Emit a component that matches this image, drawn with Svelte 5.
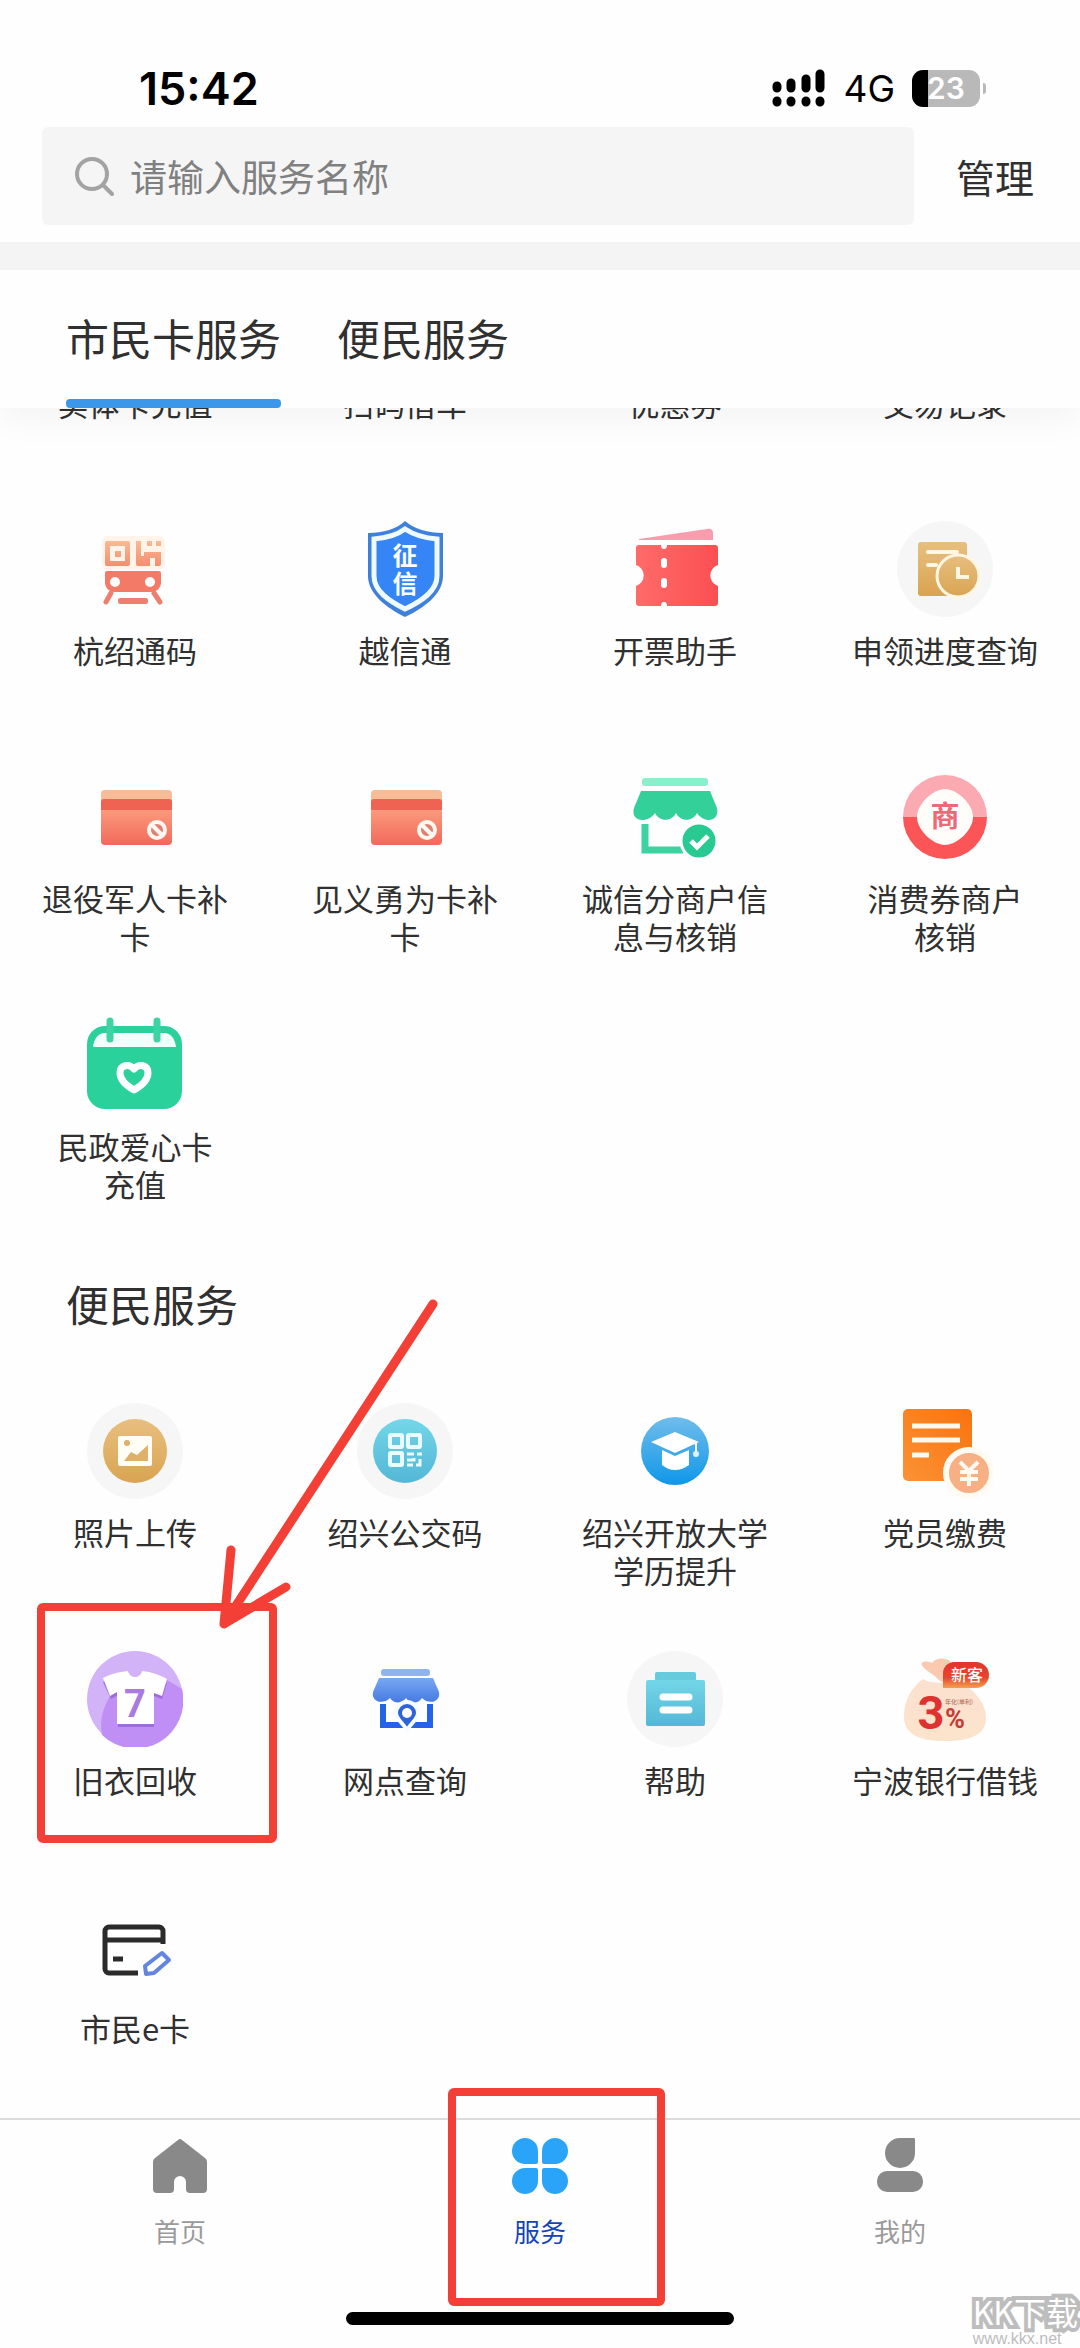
<script lang="ts">
	interface Service {
		name: string;
		icon?: string;
		marked?: boolean;
	}

	const scrolledServices: Service[] = [
		{ name: '实体卡充值' },
		{ name: '扫码借车' },
		{ name: '优惠券' },
		{ name: '交易记录' }
	];

	const cardServices: Service[] = [
		{ name: '杭绍通码', icon: 'metro' },
		{ name: '越信通', icon: 'shield' },
		{ name: '开票助手', icon: 'ticket' },
		{ name: '申领进度查询', icon: 'progress' },
		{ name: '退役军人卡补\n卡', icon: 'card' },
		{ name: '见义勇为卡补\n卡', icon: 'card' },
		{ name: '诚信分商户信\n息与核销', icon: 'shop' },
		{ name: '消费券商户\n核销', icon: 'coupon' },
		{ name: '民政爱心卡\n充值', icon: 'calendar' }
	];

	const publicServices: Service[] = [
		{ name: '照片上传', icon: 'photo' },
		{ name: '绍兴公交码', icon: 'qrcode' },
		{ name: '绍兴开放大学\n学历提升', icon: 'degree' },
		{ name: '党员缴费', icon: 'fee' },
		{ name: '旧衣回收', icon: 'shirt', marked: true },
		{ name: '网点查询', icon: 'branch' },
		{ name: '帮助', icon: 'help' },
		{ name: '宁波银行借钱', icon: 'loan' },
		{ name: '市民e卡', icon: 'ecard' }
	];

	const tabs = ['市民卡服务', '便民服务'];
	const navItems = [
		{ id: 'home', name: '首页' },
		{ id: 'services', name: '服务' },
		{ id: 'mine', name: '我的' }
	];

	let activeTab = $state(0);
	let activeNav = $state('services');
	let keyword = $state('');
</script>

{#snippet serviceIcon(name: string)}
	<svg class="service-icon" viewBox="0 0 96 96" aria-hidden="true">
		{#if name === 'metro'}
			<rect x="15" y="15" width="63" height="34" rx="6" fill="#fff3ea" />
			<path
				fill="url(#g-metro)"
				fill-rule="evenodd"
				d="M20 20h21a2 2 0 0 1 2 2v21a2 2 0 0 1-2 2H20a2 2 0 0 1-2-2V22a2 2 0 0 1 2-2zm3 5v15h15V25zm5 5h6v6h-6zM49 20h5v15h3v-4h17v12a2 2 0 0 1-2 2h-4v-8h-5v8H51a2 2 0 0 1-2-2zM60 20h5v5h-5zM69 20h5v5h-5z"
			/>
			<path
				fill="#f27a66"
				fill-rule="evenodd"
				d="M20 50h52a2 2 0 0 1 2 2v10a9 9 0 0 1-9 9H27a9 9 0 0 1-9-9V52a2 2 0 0 1 2-2zm8 6a5 5 0 1 0 0 10 5 5 0 0 0 0-10zm35 0a5 5 0 1 0 0 10 5 5 0 0 0 0-10z"
			/>
			<path d="M24 72l-5 9M67 72l6 9" stroke="#ee7f70" stroke-width="5" stroke-linecap="round" />
			<rect x="31" y="77" width="30" height="6" rx="2" fill="#ee7f70" />
		{:else if name === 'shield'}
			<path fill="#3f80dc" d="M48 0c-8 8-22 12-37 12v43c0 18 19 32 37 41 19-9 38-23 38-41V12C71 12 57 8 48 0z" />
			<path
				fill="#3585f6"
				stroke="#effaff"
				stroke-width="5"
				d="M48 8c-8 6-18 9-31 10v37c0 15 15 25 31 33 17-8 32-18 32-33V18C67 17 57 14 48 8z"
			/>
			<text class="icon-text" x="48" y="44" font-size="25" font-weight="700" fill="#fff">征</text>
			<text class="icon-text" x="48" y="72" font-size="25" font-weight="700" fill="#fff">信</text>
		{:else if name === 'ticket'}
			<path fill="#f99dae" d="M12 18L80 8c4-1 6 1 6 4v7H12z" />
			<path
				fill="url(#g-red)"
				d="M12 24h22a3 4 0 0 0 6 0h48a3 3 0 0 1 3 3v17a11 11 0 0 0 0 21v17a3 3 0 0 1-3 3H40a3 4 0 0 0-6 0H12a3 3 0 0 1-3-3V65a11 11 0 0 0 0-21V27a3 3 0 0 1 3-3z"
			/>
			<rect x="34" y="37" width="6" height="10" rx="3" fill="#fff" />
			<rect x="34" y="57" width="6" height="10" rx="3" fill="#fff" />
		{:else if name === 'progress'}
			<circle cx="48" cy="48" r="48" fill="#f6f6f6" />
			<rect x="21" y="21" width="49" height="54" rx="3" fill="url(#g-gold)" />
			<path d="M31 31h29M31 44h8" stroke="#fff7e4" stroke-width="4" stroke-linecap="round" />
			<circle cx="61" cy="55" r="21" fill="url(#g-gold)" stroke="#fff7e4" stroke-width="3" />
			<path d="M61 46v10h11" fill="none" stroke="#fff7e4" stroke-width="4" />
		{:else if name === 'card'}
			<rect x="14" y="21" width="71" height="30" rx="4" fill="#f7bd98" />
			<rect x="14" y="30" width="71" height="20" rx="3" fill="#ee6352" />
			<path fill="url(#g-card)" d="M14 41h71v31a4 4 0 0 1-4 4H18a4 4 0 0 1-4-4z" />
			<circle cx="70" cy="61" r="8" fill="#e08070" stroke="#fff8f0" stroke-width="4" />
			<path d="M64 55l12 12" stroke="#fff8f0" stroke-width="4" />
		{:else if name === 'shop'}
			<rect x="15" y="9" width="66" height="8" rx="3" fill="#8aefcb" />
			<path
				fill="#33d09a"
				d="M14 22h69l7 17c3 14-13 16-20 5-4 9-17 9-21 0-4 9-17 9-21 0C21 55 3 53 7 39z"
			/>
			<path d="M18 55v26h38" fill="none" stroke="#3dd3a0" stroke-width="7" />
			<circle cx="72" cy="72" r="18" fill="#28ca92" stroke="#fefefe" stroke-width="3" />
			<path d="M64 72l6 6 11-11" fill="none" stroke="#fff" stroke-width="5" />
		{:else if name === 'coupon'}
			<path fill="#fcaab2" d="M6 48a42 42 0 0 1 84 0z" />
			<path fill="#fb5558" d="M6 48a42 42 0 0 0 84 0z" />
			<path
				fill="#fffdfa"
				d="M48 20c12 0 28 15 28 28S60 76 48 76 20 61 20 48s16-28 28-28z"
			/>
			<text class="icon-text" x="48" y="58" font-size="29" font-weight="700" fill="#ee6878">商</text>
		{:else if name === 'calendar'}
			<rect x="0" y="9" width="95" height="83" rx="18" fill="#2bd19a" />
			<path fill="#effff9" d="M18 16h59c7 0 11 6 12 14H6c1-8 5-14 12-14z" />
			<path d="M23 4v18M70 4v18" stroke="#3fd3a3" stroke-width="7" stroke-linecap="round" />
			<path
				d="M47 73c-7-4-14-10-14-17 0-8 9-10 14-4 5-6 14-4 14 4 0 7-7 13-14 17z"
				fill="#2bd19a"
				stroke="#fff"
				stroke-width="7"
				stroke-linejoin="round"
			/>
		{:else if name === 'photo'}
			<circle cx="48" cy="48" r="48" fill="#f6f6f6" />
			<circle cx="48" cy="48" r="32" fill="url(#g-gold)" />
			<rect x="31" y="33" width="34" height="30" rx="2" fill="#fffdf5" />
			<circle cx="40" cy="40" r="3" fill="#dfb069" />
			<path fill="#dfb069" d="M37 58l7-9 6 3 11-10v16z" />
		{:else if name === 'qrcode'}
			<circle cx="48" cy="48" r="48" fill="#f6f6f6" />
			<circle cx="48" cy="48" r="32" fill="url(#g-cyan)" />
			<g fill="none" stroke="#e9fcff" stroke-width="4">
				<rect x="33" y="32" width="12" height="12" rx="1" />
				<rect x="51" y="32" width="12" height="12" rx="1" />
				<rect x="33" y="50" width="12" height="12" rx="1" />
				<path d="M50 51h7M60 51h5M50 57h7v-2M50 62h6M59 62h4v-6" stroke-width="3" />
			</g>
		{:else if name === 'degree'}
			<circle cx="48" cy="48" r="34" fill="url(#g-blue)" />
			<path fill="#fff" d="M48 29l24 10-24 11-24-11z" />
			<path fill="#fff" d="M35 47l13 6 14-6v15c-4 3-9 5-14 5s-9-2-13-5z" />
			<path d="M69 40v9" stroke="#fff" stroke-width="2" />
			<circle cx="69" cy="51" r="3" fill="#dff2ff" />
		{:else if name === 'fee'}
			<rect x="6" y="6" width="69" height="72" rx="5" fill="url(#g-orange)" />
			<path d="M15 23h48M15 37h48M15 52h17" stroke="#fff8ec" stroke-width="5" />
			<circle cx="72" cy="70" r="23" fill="#f6b084" stroke="#fffaf2" stroke-width="6" />
			<path
				d="M63 59l9 9 9-9M63 69h18M63 76h18M72 68v15"
				fill="none"
				stroke="#fffaf2"
				stroke-width="4"
			/>
		{:else if name === 'shirt'}
			<circle cx="48" cy="48" r="48" fill="#d2b3f8" />
			<path fill="#c08ff5" d="M72 24l23 14a48 48 0 0 1-80 46c-3-16 2-30 9-40z" />
			<path
				fill="#9c6fd8"
				d="M41 23c2 8 12 8 14 0l25 9-5 16-8-3v31H31V44l-7 4-8-17z"
			/>
			<path
				fill="#fff"
				d="M41 20c2 8 12 8 14 0 10 1 18 4 25 8l-5 17-8-3v31H30V41l-7 4-7-18c8-4 15-6 25-7z"
			/>
			<text class="shirt-number" x="48" y="66" font-size="38" font-weight="700" fill="#a97be0">7</text>
		{:else if name === 'branch'}
			<rect x="24" y="18" width="49" height="7" rx="3" fill="#8db4ef" />
			<path
				fill="url(#g-awning)"
				d="M22 27h54l6 14c2 10-10 13-17 6-4 6-12 6-16 0-4 6-12 6-16 0-7 7-19 4-17-6z"
			/>
			<path d="M26 53v21h47V53" fill="none" stroke="#2263e8" stroke-width="6" />
			<path
				d="M50 79C45 71 39 68 39 62a11 11 0 0 1 22 0c0 6-6 9-11 17z"
				fill="#2f63d8"
				stroke="#f5fbff"
				stroke-width="4"
			/>
			<circle cx="50" cy="62" r="5" fill="#fff" />
		{:else if name === 'help'}
			<circle cx="48" cy="48" r="48" fill="#f6f6f6" />
			<rect x="28" y="21" width="41" height="10" rx="2" fill="#66cbdc" />
			<rect x="19" y="29" width="59" height="46" rx="2" fill="url(#g-cyan)" />
			<path d="M36 46h26M36 59h26" stroke="#fff" stroke-width="7" stroke-linecap="round" />
		{:else if name === 'loan'}
			<path fill="#fbc9b0" d="M43 30c-5-6-12-9-16-13-6-6 1-8 8-5 5-6 14-5 18-2l3 10-7 12z" />
			<path
				fill="url(#g-bag)"
				d="M26 28c8 5 20 4 34 2 14 6 29 20 29 37 0 16-14 23-41 23S7 83 7 65c0-16 8-29 19-37z"
			/>
			<path fill="url(#g-badge)" d="M57 11h22a13 13 0 0 1 0 26H46V22c0-6 5-11 11-11z" />
			<text class="icon-text" x="70" y="30" font-size="16" font-weight="500" fill="#fff">新客</text>
			<text class="rate" x="34" y="78" font-size="47" font-weight="700" fill="#de3230">3</text>
			<text class="rate" x="58" y="77" font-size="27" font-weight="700" fill="#c63c38">%</text>
			<text class="icon-text" x="62" y="53" font-size="6" fill="#b0614f">年化(单利)</text>
		{:else if name === 'ecard'}
			<path
				d="M76 45V32a4 4 0 0 0-4-4H22a4 4 0 0 0-4 4v38a4 4 0 0 0 4 4h29M18 41h58"
				fill="none"
				stroke="#2b2b2b"
				stroke-width="5"
			/>
			<path d="M26 60h10" stroke="#2b2b2b" stroke-width="5" />
			<path
				d="M75 54l7 7-15 13-8 1-1-8z"
				fill="none"
				stroke="#6384e0"
				stroke-width="4"
				stroke-linejoin="round"
			/>
		{/if}
	</svg>
{/snippet}

{#snippet serviceGrid(services: Service[])}
	<div class="service-grid">
		{#each services as service}
			<a href="#service" class="service">
				{#if service.icon}
					{@render serviceIcon(service.icon)}
				{/if}
				<span class="service-name">{service.name}</span>
				{#if service.marked}
					<span class="mark mark-service"></span>
					<svg class="arrow" viewBox="0 0 230 340" aria-hidden="true">
						<path d="M218 8L9 328M16 254L9 328L71 291" />
					</svg>
				{/if}
			</a>
		{/each}
	</div>
{/snippet}

<svg class="defs" aria-hidden="true">
	<defs>
		<linearGradient id="g-metro" x2="0" y2="1">
			<stop offset="0" stop-color="#f8bb94" /><stop offset="1" stop-color="#f58d70" />
		</linearGradient>
		<linearGradient id="g-red">
			<stop offset="0" stop-color="#ff6b69" /><stop offset="1" stop-color="#fb4f52" />
		</linearGradient>
		<linearGradient id="g-gold" x2="0" y2="1">
			<stop offset="0" stop-color="#e8bf80" /><stop offset="1" stop-color="#d9a451" />
		</linearGradient>
		<linearGradient id="g-card" x2="0" y2="1">
			<stop offset="0" stop-color="#fb9a7c" /><stop offset="1" stop-color="#f1695b" />
		</linearGradient>
		<linearGradient id="g-cyan" x2="0" y2="1">
			<stop offset="0" stop-color="#73d6e8" /><stop offset="1" stop-color="#54b7d6" />
		</linearGradient>
		<linearGradient id="g-blue" x2="0" y2="1">
			<stop offset="0" stop-color="#70bdeb" /><stop offset="1" stop-color="#0f97e9" />
		</linearGradient>
		<linearGradient id="g-orange" x1="1" x2="0" y2="1">
			<stop offset="0" stop-color="#f9730f" /><stop offset="1" stop-color="#fb9236" />
		</linearGradient>
		<linearGradient id="g-awning" x2="0" y2="1">
			<stop offset="0" stop-color="#78a8f2" /><stop offset="1" stop-color="#457ae2" />
		</linearGradient>
		<linearGradient id="g-bag" x2="0" y2="1">
			<stop offset="0" stop-color="#fce0d0" /><stop offset="1" stop-color="#fbe4cb" />
		</linearGradient>
		<linearGradient id="g-badge" x2="0" y2="1">
			<stop offset="0" stop-color="#e2342c" />
			<stop offset="0.6" stop-color="#e5452f" />
			<stop offset="1" stop-color="#f5a04e" />
		</linearGradient>
	</defs>
</svg>

<div class="page">
	<div class="status-bar">
		<span class="time">15:42</span>
		<div class="status-right">
			<svg class="signal" viewBox="0 0 54 38" aria-hidden="true">
				<g stroke="#000" stroke-width="9" stroke-linecap="round">
					<path d="M5 17v2M19 14v5M34 10v9M48 5v14M5 32v1M19 32v1M34 32v1M48 32v1" />
				</g>
			</svg>
			<span class="network">4G</span>
			<div class="battery"><span>23</span></div>
		</div>
	</div>

	<header class="search-row">
		<label class="search">
			<svg class="search-icon" viewBox="0 0 40 40" aria-hidden="true">
				<circle cx="18" cy="18" r="15" fill="none" stroke="#a3a3a3" stroke-width="4" />
				<path d="M29 29l9 9" stroke="#a3a3a3" stroke-width="4" stroke-linecap="round" />
			</svg>
			<input type="text" aria-label="搜索服务" placeholder="请输入服务名称" bind:value={keyword} />
		</label>
		<button class="manage">管理</button>
	</header>

	<div class="tabs">
		{#each tabs as tab, i}
			<button class="tab" class:active={activeTab === i} onclick={() => (activeTab = i)}>{tab}</button>
		{/each}
	</div>

	<main>
		<div class="scrolled">
			{@render serviceGrid(scrolledServices)}
		</div>
		{@render serviceGrid(cardServices)}
		<h2>便民服务</h2>
		{@render serviceGrid(publicServices)}
	</main>

	<nav>
		{#each navItems as item}
			<button
				class="nav-item"
				class:active={activeNav === item.id}
				onclick={() => (activeNav = item.id)}
			>
				<svg class="nav-icon" viewBox="0 0 56 56" aria-hidden="true">
					{#if item.id === 'home'}
						<path
							d="M26 2a3 3 0 0 1 4 0l23 18a5 5 0 0 1 2 4v27a4 4 0 0 1-4 4H38a4 4 0 0 1-4-4V44a6 6 0 0 0-12 0v7a4 4 0 0 1-4 4H5a4 4 0 0 1-4-4V24a5 5 0 0 1 2-4z"
						/>
					{:else if item.id === 'services'}
						<path
							d="M13 0a13 13 0 0 1 13 13v11a2 2 0 0 1-2 2H13a13 13 0 0 1 0-26zM43 0a13 13 0 0 1 0 26H32a2 2 0 0 1-2-2V13A13 13 0 0 1 43 0zM13 30h11a2 2 0 0 1 2 2v11a13 13 0 1 1-13-13zM32 30h11a13 13 0 1 1-13 13V32a2 2 0 0 1 2-2z"
						/>
					{:else}
						<path
							d="M28 0h14a1 1 0 0 1 1 1v14a15 15 0 1 1-15-15zM15 33h26a10 10 0 0 1 10 10v1a10 10 0 0 1-10 10H15A10 10 0 0 1 5 44v-1a10 10 0 0 1 10-10z"
						/>
					{/if}
				</svg>
				<span>{item.name}</span>
				{#if item.id === 'services'}
					<span class="mark mark-nav"></span>
				{/if}
			</button>
		{/each}
	</nav>

	<div class="home-indicator"></div>

	<div class="watermark">
		<strong>KK下载</strong>
		<span>www.kkx.net</span>
	</div>
</div>

<style>
	:global(body) {
		background: #fefefe;
	}

	.page {
		position: relative;
		display: flex;
		flex-direction: column;
		font-family: 'Noto Sans CJK SC', sans-serif;
		color: #303030;
		background: #fefefe;
	}

	.defs {
		position: absolute;
		width: 0;
		height: 0;
	}

	button {
		padding: 0;
		border: 0;
		background: none;
		font: inherit;
		color: inherit;
	}

	.status-bar {
		display: flex;
		justify-content: space-between;
		align-items: center;
		height: 78px;
		padding: 49px 100px 0 139px;
		font-family: Inter, sans-serif;
		color: #000;
	}

	.time {
		font-size: 45px;
		font-weight: 600;
	}

	.status-right {
		display: flex;
		align-items: center;
		gap: 17px;
	}

	.signal {
		width: 54px;
		height: 38px;
	}

	.network {
		font-size: 37px;
	}

	.battery {
		position: relative;
		width: 68px;
		height: 37px;
		border-radius: 11px;
		background: linear-gradient(to right, #000 16px, #b9b9b9 16px);
		font-size: 30px;
		font-weight: 600;
		line-height: 37px;
		text-align: center;
		color: #fff;
	}

	.battery::after {
		content: '';
		position: absolute;
		top: 13px;
		right: -6px;
		width: 3px;
		height: 11px;
		border-radius: 0 3px 3px 0;
		background: #b9b9b9;
	}

	.search-row {
		display: flex;
		align-items: center;
		gap: 42px;
		padding: 0 46px 17px 42px;
		border-bottom: 28px solid #f4f4f4;
	}

	.search {
		flex: 1;
		display: flex;
		align-items: center;
		gap: 16px;
		height: 98px;
		padding: 0 32px;
		border-radius: 6px;
		background: #f5f5f5;
	}

	.search-icon {
		width: 40px;
		height: 40px;
	}

	.search input {
		flex: 1;
		min-width: 0;
		padding: 0;
		border: 0;
		outline: none;
		background: none;
		font: inherit;
		font-size: 37px;
		color: #303030;
	}

	.search input::placeholder {
		color: #808080;
		opacity: 1;
	}

	.manage {
		font-size: 39px;
	}

	.tabs {
		position: relative;
		z-index: 1;
		display: flex;
		gap: 56px;
		height: 138px;
		padding: 0 66px;
		background: #fefefe;
		box-shadow: 0 8px 36px rgba(0, 0, 0, 0.05);
		clip-path: inset(0 0 -60px 0);
	}

	.tab {
		position: relative;
		padding-bottom: 4px;
		font-size: 43px;
	}

	.tab.active::after {
		content: '';
		position: absolute;
		right: 0;
		bottom: 0;
		left: 0;
		height: 9px;
		border-radius: 4px;
		background: #3a97ea;
	}

	main {
		overflow: hidden;
		padding-bottom: 33px;
	}

	/* labels of the row that has scrolled up under the tabs */
	.scrolled {
		display: flow-root;
		height: 113px;
	}

	.scrolled .service-grid {
		margin-top: -24px;
	}

	.scrolled .service {
		min-height: 76px;
	}

	.service-grid {
		display: grid;
		grid-template-columns: repeat(4, 1fr);
		row-gap: 62px;
	}

	.service {
		position: relative;
		display: flex;
		flex-direction: column;
		align-items: center;
		gap: 14px;
		min-height: 186px;
		color: inherit;
		text-decoration: none;
	}

	.service-icon {
		width: 96px;
		height: 96px;
	}

	.service-name {
		font-size: 31px;
		line-height: 38px;
		text-align: center;
		white-space: pre-line;
	}

	.icon-text {
		font-family: 'Noto Sans CJK SC', sans-serif;
		text-anchor: middle;
	}

	.rate,
	.shirt-number {
		font-family: 'Liberation Sans Narrow', Roboto, sans-serif;
		text-anchor: middle;
	}

	h2 {
		margin: 70px 66px;
		font-size: 43px;
		font-weight: 400;
		line-height: 60px;
	}

	.mark {
		position: absolute;
		z-index: 1;
		box-sizing: border-box;
		border: 8px solid #f33f36;
		border-radius: 6px;
	}

	.mark-service {
		top: -48px;
		left: calc(50% - 98px);
		width: 240px;
		height: 240px;
	}

	.arrow {
		position: absolute;
		z-index: 1;
		top: -355px;
		left: calc(50% + 80px);
		width: 230px;
		height: 340px;
		fill: none;
		stroke: #f33f36;
		stroke-width: 9px;
		stroke-linecap: round;
		stroke-linejoin: round;
	}

	nav {
		display: grid;
		grid-template-columns: repeat(3, 1fr);
		border-top: 2px solid #d9dad9;
	}

	.nav-item {
		position: relative;
		display: flex;
		flex-direction: column;
		align-items: center;
		gap: 18px;
		padding: 18px 0 62px;
		font-size: 26px;
		line-height: 38px;
		color: #9a9a9a;
	}

	.nav-item.active {
		color: #1444b8;
	}

	.nav-icon {
		width: 56px;
		height: 56px;
		fill: #898989;
	}

	.active .nav-icon {
		fill: #2aa4f8;
	}

	.mark-nav {
		top: -32px;
		left: calc(50% - 92px);
		width: 217px;
		height: 218px;
	}

	.home-indicator {
		align-self: center;
		width: 36%;
		height: 13px;
		margin-bottom: 22px;
		border-radius: 7px;
		background: #000;
	}

	.watermark {
		position: absolute;
		right: 0;
		bottom: 0;
		display: flex;
		flex-direction: column;
		color: #bdbdbd;
	}

	.watermark strong {
		padding-right: 2px;
		font-size: 32px;
		font-weight: 400;
		line-height: 40px;
		color: #fff;
		paint-order: stroke fill;
		-webkit-text-stroke: 8px #bdbdbd;
	}

	.watermark span {
		font-family: 'Liberation Sans', sans-serif;
		font-size: 16px;
		line-height: 16px;
	}
</style>
